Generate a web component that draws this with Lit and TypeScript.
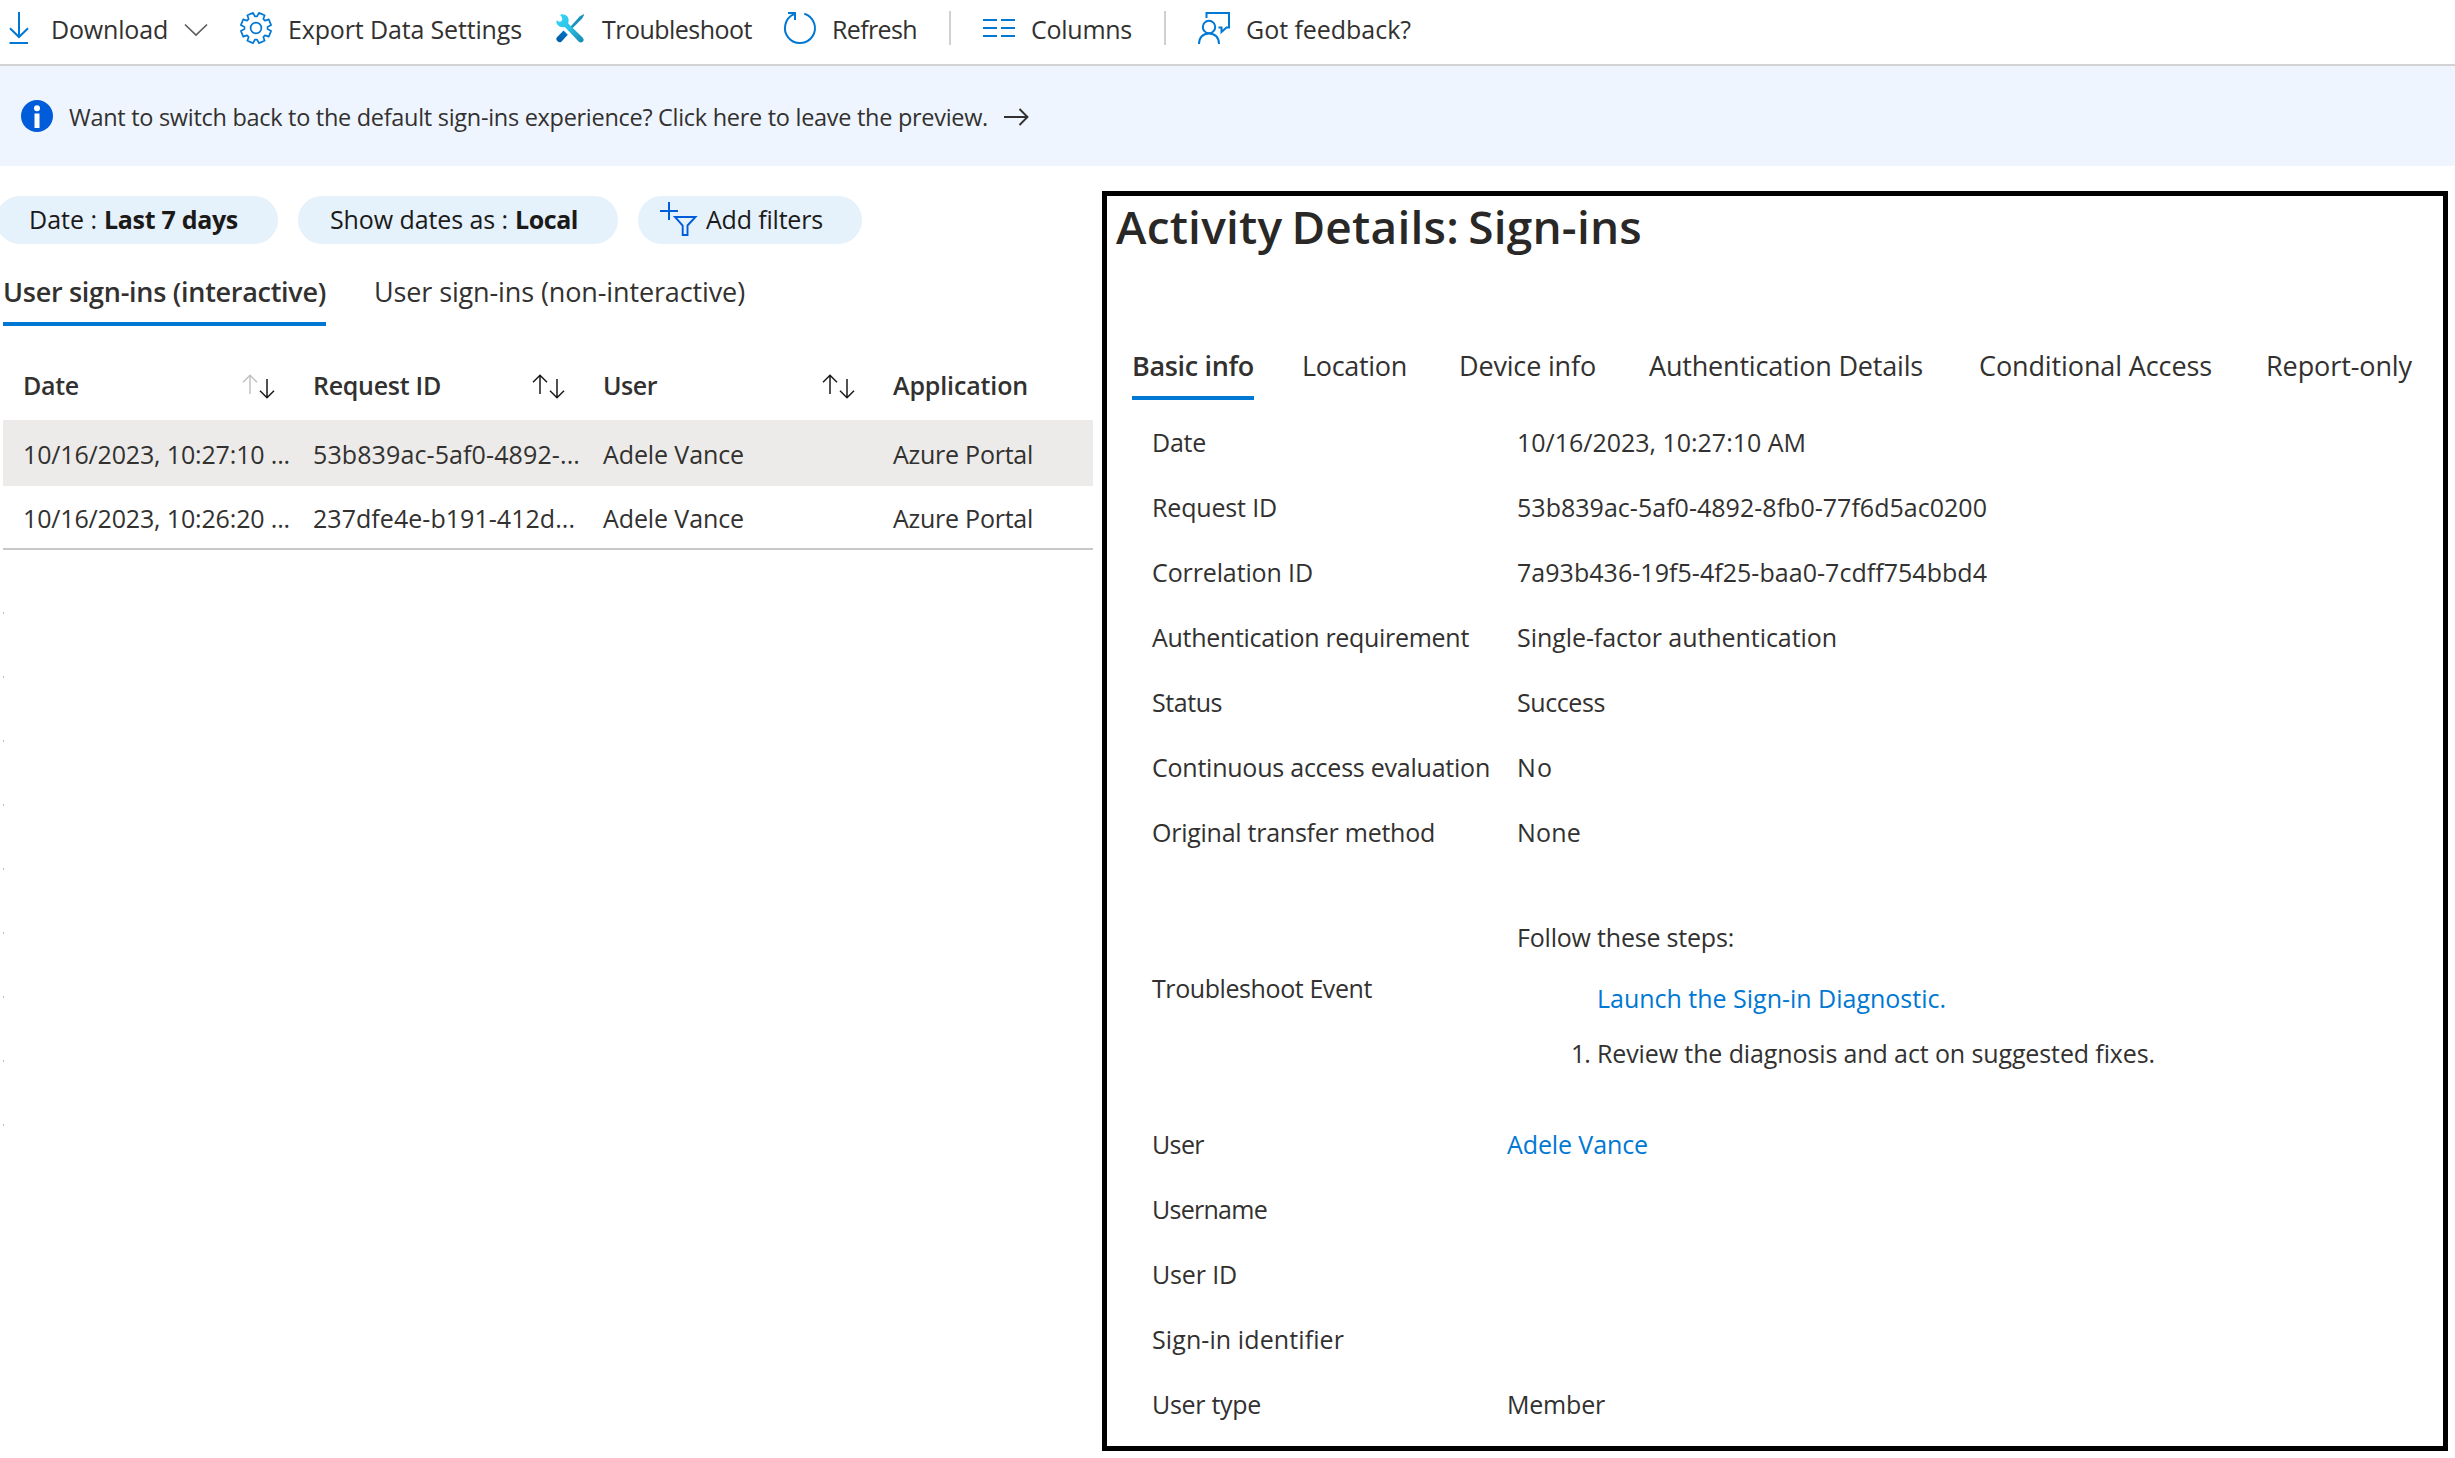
import { LitElement, html, css, svg, nothing } from "lit";
import { customElement, property } from "lit/decorators.js";
import { classMap } from "lit/directives/class-map.js";

/** A single line of text whose letter spacing is tuned so that it fills `w` pixels. */
@customElement("fit-text")
class FitText extends LitElement {
  @property({ type: Number }) w = 0;
  @property() text = "";

  static styles = css`
    :host { display: inline-block; white-space: pre; flex: none; }
  `;

  render() {
    return html`<span>${this.text}</span>`;
  }

  updated() {
    const span = this.renderRoot.querySelector("span") as HTMLSpanElement;
    span.style.letterSpacing = "0px";
    const natural = span.getBoundingClientRect().width;
    span.style.letterSpacing = `${(this.w - natural) / this.text.length}px`;
    this.style.width = `${this.w}px`;
  }
}

const fit = (text: string, w: number) => html`<fit-text .text=${text} .w=${w}></fit-text>`;

/** Outline of an eight-toothed gear centred on (16, 16). */
const gearPath = (() => {
  const pts: string[] = [];
  const at = (deg: number, r: number) => {
    const a = (deg * Math.PI) / 180;
    pts.push(`${(16 + r * Math.cos(a)).toFixed(2)},${(16 + r * Math.sin(a)).toFixed(2)}`);
  };
  for (let k = 0; k < 8; k++) {
    const c = 22.5 + k * 45;
    at(c - 17, 11.6);
    at(c - 11.5, 15.4);
    at(c + 11.5, 15.4);
    at(c + 17, 11.6);
  }
  return `M${pts.join("L")}Z`;
})();

const icon = (body: unknown, w = 32, h = 32) => html`
  <svg class="icon" width=${w} height=${h} viewBox="0 0 ${w} ${h}" fill="none">${body}</svg>`;

const icons = {
  download: icon(svg`<path d="M16 0V25M7 16.2L16 25L25 16.2M6.5 31H25" stroke="#0078d4" stroke-width="2"/>`),
  chevron: icon(svg`<path d="M1 1.5L12 12L23 1.5" stroke="#605e5c" stroke-width="1.7"/>`, 24, 10),
  gear: icon(svg`
    <path d=${gearPath} stroke="#0078d4" stroke-width="1.7" stroke-linejoin="round"/>
    <circle cx="16" cy="16" r="5.4" stroke="#0078d4" stroke-width="1.7"/>`),
  tools: icon(svg`
    <defs>
      <linearGradient id="wr" x1="4" y1="4" x2="28" y2="30" gradientUnits="userSpaceOnUse">
        <stop offset="0" stop-color="#32d4f5"/><stop offset=".45" stop-color="#2cc3e6"/><stop offset="1" stop-color="#198ab3"/>
      </linearGradient>
      <linearGradient id="sd" x1="14" y1="19" x2="4" y2="30" gradientUnits="userSpaceOnUse">
        <stop offset="0" stop-color="#0078d4"/><stop offset="1" stop-color="#005ba1"/>
      </linearGradient>
    </defs>
    <path d="M29.6 2.2L30.2 2.8L28.2 6.6L18.2 16.6L16.4 14.8L25.6 4.6Z" fill="#1b93ba"/>
    <path d="M9.6 18.6L13.8 22.8L7.6 29.4Q5.600 31.200 3.600 29.200Q1.200 26.800 3.200 24.900Z" fill="url(#sd)"/>
    <path d="M2.400 8.200L5.200 9.800Q7.800 10 8.300 7.200Q8.400 5.200 6.200 3L7.200 2.200Q11.200 1.800 13.400 4.600Q15.400 7.200 14.200 11.400L28.600 25.400Q30.600 27.800 28.800 29.700Q26.800 31.400 24.600 29.600L10.800 14.900Q6.600 16 3.900 13.300Q2 11.200 2.400 8.200Z" fill="url(#wr)"/>`),
  refresh: icon(svg`
    <path d="M20.300 1.700A15 15 0 1 1 10.200 2.200" stroke="#0078d4" stroke-width="2"/>
    <path d="M4 1H11V8" stroke="#0078d4" stroke-width="2"/>`),
  columns: icon(svg`<path d="M0 8H14M18 8H32M0 16H14M18 16H32M0 24H14M18 24H32" stroke="#0078d4" stroke-width="2"/>`),
  feedback: icon(svg`
    <path d="M8.500 6V1H31V15.500H28.500L23.500 20V15.500H20.500" stroke="#0078d4" stroke-width="2"/>
    <circle cx="11" cy="15" r="6.200" stroke="#0078d4" stroke-width="2"/>
    <path d="M1 32C1 25.500 5 21.400 11 21.400S21 25.500 21 32" stroke="#0078d4" stroke-width="2"/>`),
  info: icon(svg`
    <circle cx="16" cy="16" r="16" fill="#015cda"/>
    <circle cx="16" cy="8.200" r="3" fill="#fff"/><rect x="13.500" y="13.500" width="5" height="14.500" fill="#fff"/>`),
  arrow: icon(svg`<path d="M0 10H23.500M15.500 2L23.500 10L15.500 18" stroke="#323130" stroke-width="1.900"/>`, 25, 18),
  addFilter: icon(svg`
    <path d="M9 0V18M0 9H18" stroke="#015cda" stroke-width="2"/>
    <path d="M15 15H35.500L27.500 23.500V33H22.700V23.500Z" stroke="#015cda" stroke-width="1.900"/>`, 37, 36),
};

const sortIcon = (dimUp: boolean) => icon(svg`
  <path d="M8 20V1.200M1 8.200L8 1.200L15 8.200" stroke=${dimUp ? "#c4c2c0" : "#1b1a19"} stroke-width="1.500"/>
  <path d="M25 5V23.800M18 16.800L25 23.800L32 16.800" stroke="#1b1a19" stroke-width="1.500"/>`, 33, 25);

@customElement("app-root")
class AppRoot extends LitElement {
  static styles = css`
    :host {
      display: block;
      width: 2455px;
      height: 1458px;
      overflow: hidden;
      background: #fff;
      color: #323130;
      font-family: "Open Sans", "Noto Sans", sans-serif;
      font-size: 25px;
      line-height: 34px;
    }
    .icon { display: block; flex: none; overflow: visible; }
    .toolbar {
      display: flex; align-items: center; gap: 32px; box-sizing: border-box;
      height: 66px; padding: 0 0 8px 3px; border-bottom: 2px solid #d2d2d2;
    }
    .tool { display: flex; align-items: center; gap: 16px; }
    .tool fit-text { margin-top: 2px; }
    .sep { width: 2px; height: 34px; background: #d2d0ce; }
    .banner {
      display: flex; align-items: center; height: 100px; padding-left: 21px;
      background: #eff5ff; font-size: 23.5px; gap: 16px;
    }
    .banner fit-text { margin-top: 2px; }
    .main { display: flex; gap: 9px; height: 1292px; }
    .list { width: 1093px; padding-top: 30px; }
    .pills { display: flex; gap: 20px; margin-left: -4px; }
    .pill {
      display: flex; align-items: center; box-sizing: border-box; height: 48px;
      border-radius: 24px; background: #e5f1fb; color: #1b1a19; line-height: 34px;
    }
    .pill fit-text { display: block; margin-bottom: 2px; }
    .range { width: 282px; padding-left: 33px; gap: 7px; }
    .zone { width: 320px; padding-left: 32px; gap: 7px; }
    .add { width: 224px; padding-left: 22px; gap: 9px; }
    .strong { font-weight: 700; }
    .tabs { display: flex; gap: 48px; margin: 17px 0 0 3px; font-size: 27px; line-height: 61px; }
    .active { font-weight: 600; border-bottom: 4px solid #0078d4; height: 61px; }
    .table { margin: 25px 0 0 3px; }
    .row { display: grid; grid-template-columns: 290px 290px 290px 1fr; align-items: center; box-sizing: border-box; padding-left: 20px; }
    .head { height: 69px; font-weight: 600; padding-bottom: 1px; }
    .th { display: flex; justify-content: space-between; padding-right: 38px; }
    .th .icon { margin-top: 6px; }
    .selected { background: #ecebe9; height: 66px; padding-top: 2px; }
    .last { height: 64px; border-bottom: 2px solid #c8c8c8; padding-top: 2px; }
    .ticks { display: flex; flex-direction: column; gap: 62px; margin: 62px 0 0 3px; }
    .tick { width: 1px; height: 2px; background: #bdbdbd; }
    .panel { box-sizing: border-box; width: 1346px; height: 1260px; margin-top: 25px; border: 5px solid #000; }
    .title { margin: 0 0 79px 9px; font-size: 46px; line-height: 60px; font-weight: 600; color: #292827; word-spacing: -3px; }
    .dtabs {
      display: grid; grid-template-columns: 170px 157px 190px 330px 287px 149px;
      justify-items: start; height: 65px; margin: 0 0 9px 25px; font-size: 27px; line-height: 61px;
    }
    .detail { display: grid; grid-template-columns: 365px 1fr; align-items: center; height: 65px; margin-left: 45px; }
    .tight { grid-template-columns: 355px 1fr; }
    .event { height: 247px; }
    .steps { display: flex; flex-direction: column; padding-top: 15px; }
    .steps .step1 { margin: 27px 0 0 80px; }
    .steps .step2 { display: flex; margin: 21px 0 0 54px; gap: 7px; }
    .link { color: #0078d4; }
  `;

  private tool(ic: unknown, text: string, w: number) {
    return html`<div class="tool">${ic}${fit(text, w)}</div>`;
  }

  private detail(label: string, lw: number, value = "", vw = 0, cls: Record<string, boolean> = {}) {
    return html`
      <div class=${classMap({ detail: true, tight: !!cls.tight })}>
        ${fit(label, lw)}
        ${value ? html`<span class=${classMap({ link: !!cls.link })}>${fit(value, vw)}</span>` : nothing}
      </div>`;
  }

  render() {
    return html`
      <div class="toolbar">
        <div class="tool">${icons.download}${fit("Download", 117)}${icons.chevron}</div>
        ${this.tool(icons.gear, "Export Data Settings", 234)}
        ${this.tool(icons.tools, "Troubleshoot", 150)}
        ${this.tool(icons.refresh, "Refresh", 85)}
        <div class="sep"></div>
        ${this.tool(icons.columns, "Columns", 101)}
        <div class="sep"></div>
        ${this.tool(icons.feedback, "Got feedback?", 165)}
      </div>
      <div class="banner">
        ${icons.info}
        ${fit("Want to switch back to the default sign-ins experience? Click here to leave the preview.", 919)}
        ${icons.arrow}
      </div>
      <div class="main">
        <div class="list">
          <div class="pills">
            <div class="pill range">
              ${fit("Date :", 68)}<span class="strong">${fit("Last 7 days", 134)}</span>
            </div>
            <div class="pill zone">
              ${fit("Show dates as :", 178)}<span class="strong">${fit("Local", 63)}</span>
            </div>
            <div class="pill add">
              ${icons.addFilter}${fit("Add filters", 117)}
            </div>
          </div>
          <div class="tabs">
            <div class="active">${fit("User sign-ins (interactive)", 323)}</div>
            <div>${fit("User sign-ins (non-interactive)", 371)}</div>
          </div>
          <div class="table">
            <div class="row head">
              <div class="th">${fit("Date", 56)}${sortIcon(true)}</div>
              <div class="th">${fit("Request ID", 128)}${sortIcon(false)}</div>
              <div class="th">${fit("User", 54)}${sortIcon(false)}</div>
              <div class="th">${fit("Application", 135)}</div>
            </div>
            <div class="row selected">
              ${fit("10/16/2023, 10:27:10 ...", 267)}${fit("53b839ac-5af0-4892-...", 267)}
              ${fit("Adele Vance", 141)}${fit("Azure Portal", 140)}
            </div>
            <div class="row last">
              ${fit("10/16/2023, 10:26:20 ...", 267)}${fit("237dfe4e-b191-412d...", 262)}
              ${fit("Adele Vance", 141)}${fit("Azure Portal", 140)}
            </div>
          </div>
          <div class="ticks">${Array.from({ length: 9 }, () => html`<div class="tick"></div>`)}</div>
        </div>
        <div class="panel">
          <div class="title">${fit("Activity Details: Sign-ins", 526)}</div>
          <div class="dtabs">
            <div class="active">${fit("Basic info", 122)}</div>
            <div>${fit("Location", 105)}</div>
            <div>${fit("Device info", 137)}</div>
            <div>${fit("Authentication Details", 274)}</div>
            <div>${fit("Conditional Access", 233)}</div>
            <div>${fit("Report-only", 146)}</div>
          </div>
          ${this.detail("Date", 54, "10/16/2023, 10:27:10 AM", 289)}
          ${this.detail("Request ID", 125, "53b839ac-5af0-4892-8fb0-77f6d5ac0200", 470)}
          ${this.detail("Correlation ID", 161, "7a93b436-19f5-4f25-baa0-7cdff754bbd4", 470)}
          ${this.detail("Authentication requirement", 317, "Single-factor authentication", 320)}
          ${this.detail("Status", 70, "Success", 88)}
          ${this.detail("Continuous access evaluation", 338, "No", 36)}
          ${this.detail("Original transfer method", 283, "None", 64)}
          <div class="detail event">
            ${fit("Troubleshoot Event", 220)}
            <div class="steps">
              ${fit("Follow these steps:", 217)}
              <span class="step1 link">${fit("Launch the Sign-in Diagnostic.", 349)}</span>
              <span class="step2">${fit("1.", 19)}${fit("Review the diagnosis and act on suggested fixes.", 558)}</span>
            </div>
          </div>
          ${this.detail("User", 52, "Adele Vance", 141, { link: true, tight: true })}
          ${this.detail("Username", 115)}
          ${this.detail("User ID", 85)}
          ${this.detail("Sign-in identifier", 192)}
          ${this.detail("User type", 109, "Member", 98, { tight: true })}
        </div>
      </div>`;
  }
}
